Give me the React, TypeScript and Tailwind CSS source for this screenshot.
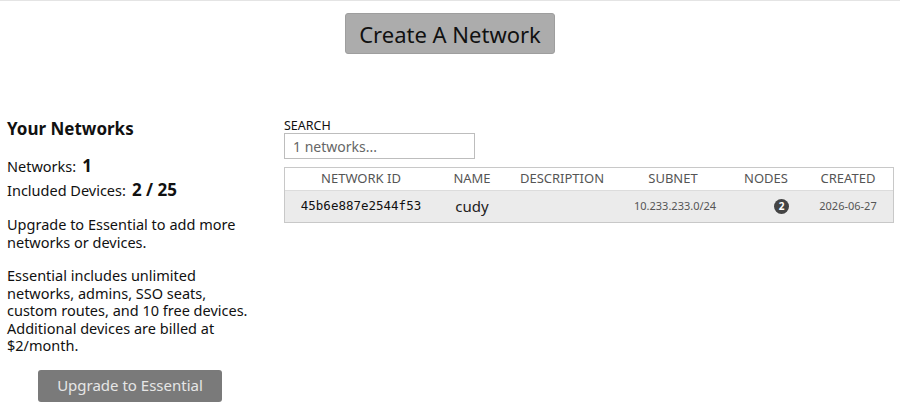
import React from 'react';

const networks = [
  {
    id: '45b6e887e2544f53',
    name: 'cudy',
    description: '',
    subnet: '10.233.233.0/24',
    nodes: 2,
    created: '2026-06-27',
  },
];

function NetworkTable() {
  return (
    <div className="border border-[#c8c8c8] text-[#222]">
      {/* Header */}
      <div className="flex h-[22px] items-center text-[13px] uppercase text-[#555] bg-white">
        <div className="w-[152px] text-center">Network ID</div>
        <div className="w-[70px] text-center">Name</div>
        <div className="w-[110px] text-center">Description</div>
        <div className="w-[112px] text-center">Subnet</div>
        <div className="w-[74px] text-center">Nodes</div>
        <div className="flex-1 text-center">Created</div>
      </div>
      {networks.map((n) => (
        <div key={n.id} className="flex h-[32px] items-center bg-[#ebebeb] border-t border-[#dcdcdc]">
          <div className="w-[152px] text-center text-[12.5px] font-['DejaVu_Sans_Mono',monospace] text-[#111]">
            {n.id}
          </div>
          <div className="w-[70px] text-center text-[15px]">{n.name}</div>
          <div className="w-[110px] text-center text-[13px]">{n.description}</div>
          <div className="w-[112px] pl-[17px] text-[11px] text-[#555] whitespace-nowrap">{n.subnet}</div>
          <div className="w-[74px] flex justify-end pr-[14px]">
            <span className="w-[15px] h-[15px] rounded-full bg-[#444] text-white text-[10px] font-bold flex items-center justify-center">
              {n.nodes}
            </span>
          </div>
          <div className="flex-1 text-center text-[11px] text-[#555]">{n.created}</div>
        </div>
      ))}
    </div>
  );
}

export default function App() {
  return (
    <div className="w-[900px] h-[410px] bg-white border-t border-[#e4e4e4] font-['Noto_Sans',sans-serif] text-[#111] overflow-hidden">
      {/* Create button */}
      <div className="flex justify-center pt-[12px]">
        <button className="w-[210px] h-[41px] rounded-[3px] bg-[#acacac] border border-[#9e9e9e] text-[22px] text-[#111] leading-none">
          Create A Network
        </button>
      </div>

      <div className="flex mt-[64px]">
        {/* Plan summary */}
        <div className="w-[284px] pl-[7px]">
          <h2 className="text-[17px] font-bold leading-[22px]">Your Networks</h2>
          <div className="mt-[14px] text-[14.5px] leading-[23px]">
            <div className="flex items-baseline gap-[6px]">
              <span>Networks:</span>
              <span className="text-[17px] font-bold">1</span>
            </div>
            <div className="flex items-baseline gap-[6px]">
              <span>Included Devices:</span>
              <span className="text-[17px] font-bold">2 / 25</span>
            </div>
          </div>
          <p className="mt-[14px] text-[14.5px] leading-[17.5px] pr-[27px]">
            Upgrade to Essential to add more networks or devices.
          </p>
          <p className="mt-[16px] text-[14.5px] leading-[17.5px] pr-[27px]">
            Essential includes unlimited networks, admins, SSO seats, custom routes, and 10 free devices.
            Additional devices are billed at $2/month.
          </p>
          <div className="mt-[15px] pl-[31px]">
            <button className="w-[184px] h-[32px] rounded-[3px] bg-[#7a7a7a] text-[15px] text-[#e6e6e6]">
              Upgrade to Essential
            </button>
          </div>
        </div>

        {/* Networks list */}
        <div className="w-[610px] pt-[1px]">
          <div className="text-[12.5px] leading-[14px] text-[#111]">SEARCH</div>
          <input
            className="w-[191px] h-[26px] border border-[#bdbdbd] px-[8px] text-[14px] placeholder:text-[#666] outline-none"
            placeholder="1 networks..."
          />
          <div className="mt-[8px]">
            <NetworkTable />
          </div>
        </div>
      </div>
    </div>
  );
}
